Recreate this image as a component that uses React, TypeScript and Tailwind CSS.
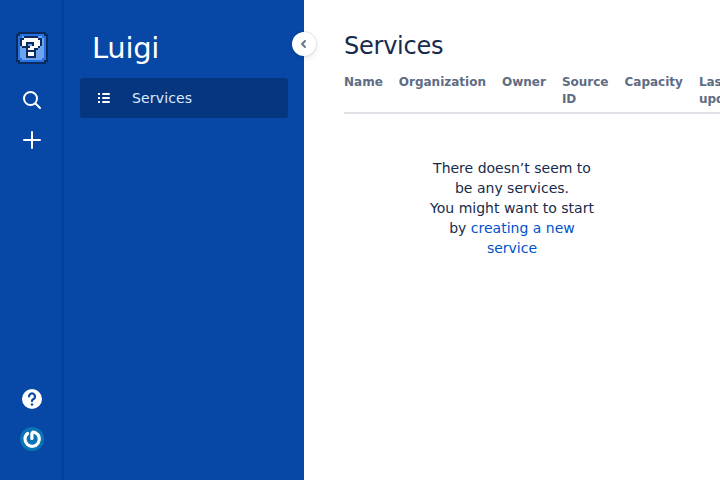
import React from "react";

const palette: Record<string, string> = {
  k: "#0d2a5c",
  b: "#2272e6",
  m: "#6ea4ee",
  w: "#ffffff",
};

const pixels = [
  ".kkkkkkkkkkkkkk.",
  "kkbbbbbbbbbbbbkk",
  "kbbmkkkkkkkmmbbk",
  "kbkkwwwwwwwkkmbk",
  "kbkwwwwwwwwwkmbk",
  "kbkwwkkkkwwwkmbk",
  "kbkwwkmmkwwwkmbk",
  "kbmkkkkwwwwkmmbk",
  "kbmmmkwwwkkmmmbk",
  "kbmmmkkkkkmmmmbk",
  "kbmmmkwwwkmmmmbk",
  "kbmmmkwwwkmmmmbk",
  "kbmmmkkkkkmmmmbk",
  "kbbmmmmmmmmmmbbk",
  "kkbbbbbbbbbbbbkk",
  ".kkkkkkkkkkkkkk.",
];

function BlockLogo() {
  return (
    <svg className="size-8" viewBox="0 0 16 16" shapeRendering="crispEdges">
      {pixels.flatMap((row, y) =>
        [...row].map((c, x) =>
          c === "." ? null : <rect key={`${x}-${y}`} x={x} y={y} width="1" height="1" fill={palette[c]} />
        )
      )}
    </svg>
  );
}

function GlobalNav() {
  return (
    <nav className="flex w-16 shrink-0 flex-col items-center bg-[#0747a6] bg-[linear-gradient(to_left,rgba(0,0,0,0.12)_0px,rgba(0,0,0,0.12)_1px,rgba(0,0,0,0.07)_1px,rgba(0,0,0,0)_4px)] pt-8 pb-[29px] text-white">
      <BlockLogo />
      <div className="mt-4 flex size-10 items-center justify-center">
        <svg className="size-6" viewBox="0 0 24 24" fill="none" stroke="currentColor" strokeWidth="2" strokeLinecap="round">
          <circle cx="10.5" cy="10.5" r="6.5" />
          <path d="M15.5 15.5l4.5 4.5" />
        </svg>
      </div>
      <div className="flex size-10 items-center justify-center">
        <svg className="size-6" viewBox="0 0 24 24" fill="none" stroke="currentColor" strokeWidth="2" strokeLinecap="round">
          <path d="M12 4v16M4 12h16" />
        </svg>
      </div>
      <div className="mt-auto flex size-10 items-center justify-center">
        <svg className="size-6" viewBox="0 0 24 24" fill="none">
          <circle cx="12" cy="12" r="10" fill="white" />
          <path d="M9 9.5a3 3 0 1 1 4.5 2.6c-1 .5-1.5.9-1.5 2" stroke="#0747a6" strokeWidth="2.2" strokeLinecap="round" />
          <circle cx="12" cy="17.5" r="1.2" fill="#0747a6" />
        </svg>
      </div>
      <svg className="mt-2 size-6" viewBox="0 0 24 24" fill="none">
        <circle cx="12" cy="12" r="12" fill="#0a74b5" />
        <path d="M7.6 6.5A7.2 7.2 0 1 0 15.3 5.6q-3.4-1.3-3.4 1.3v4.6" stroke="white" strokeWidth="3.2" strokeLinecap="round" strokeLinejoin="round" />
      </svg>
    </nav>
  );
}

function ProductNav() {
  return (
    <aside className="relative w-60 shrink-0 bg-[#0747a6] px-4 pt-7 text-white">
      <h2 className="px-3 text-[29px] leading-10 tracking-[-0.29px]">Luigi</h2>
      <div className="mt-2.5 flex h-10 items-center rounded-[3px] bg-[#06367f] pl-3 text-[#deebff]">
        <svg className="size-6 text-white" viewBox="0 0 24 24" fill="currentColor">
          <path d="M11 7h6a1 1 0 0 1 0 2h-6a1 1 0 0 1 0-2zM11 11h6a1 1 0 0 1 0 2h-6a1 1 0 0 1 0-2zM11 15h6a1 1 0 0 1 0 2h-6a1 1 0 0 1 0-2zM6 7h2v2H6zM6 11h2v2H6zM6 15h2v2H6z" />
        </svg>
        <span className="ml-4 text-sm tracking-[0.16px]">Services</span>
      </div>
      <button className="absolute top-8 -right-3 flex size-6 items-center justify-center rounded-full bg-white text-[#6b778c] shadow-[0_0_0_1px_rgba(9,30,66,0.08),0_2px_4px_1px_rgba(9,30,66,0.08)]">
        <svg className="size-6" viewBox="0 0 24 24" fill="none" stroke="currentColor" strokeWidth="2" strokeLinecap="round" strokeLinejoin="round">
          <path d="M13 9l-3 3 3 3" />
        </svg>
      </button>
    </aside>
  );
}

export default function App() {
  return (
    <div className="flex h-[480px] w-[720px] overflow-hidden bg-white font-['DejaVu_Sans',sans-serif] text-sm text-[#172b4d]">
      <GlobalNav />
      <ProductNav />
      <main className="min-w-0 flex-1 overflow-hidden pl-10 pt-8">
        <h1 className="text-2xl leading-7 tracking-[-0.24px]">Services</h1>
        <div className="mt-[13px] flex h-[41px] w-[420px] gap-4 border-b-2 border-[#dfe1e6] pt-px text-xs leading-[17px] font-bold text-[#5e6c84]">
          <span className="shrink-0">Name</span>
          <span className="shrink-0">Organization</span>
          <span className="shrink-0">Owner</span>
          <span className="shrink-0">Source<br />ID</span>
          <span className="shrink-0">Capacity</span>
          <span className="shrink-0">Last<br />updated</span>
        </div>
        <p className="mt-11 ml-[78px] w-[180px] text-center leading-5">
          There doesn’t seem to<br />be any services.<br />You might want to start<br />by <a className="text-[#0052cc]">creating a new<br />service</a>
        </p>
      </main>
    </div>
  );
}
